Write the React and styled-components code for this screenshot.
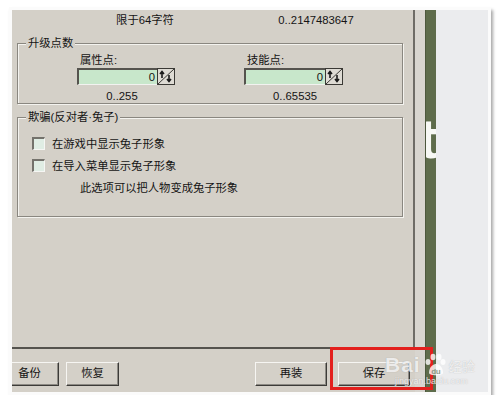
import React from 'react';
import styled, { createGlobalStyle } from 'styled-components';

const Global = createGlobalStyle`
  body {
    margin: 0;
    background: #ffffff;
    font-family: "Liberation Sans", "Noto Sans CJK SC", sans-serif;
  }
`
const Frame = styled.div`
  position: relative;
  margin: 7px 0 0 9px;
  width: 476px;
  height: 382px;
  padding: 3px;
  background: #fbfbfb;
  box-shadow: 2px 3px 3px rgba(0, 0, 0, 0.35);
`
const Screen = styled.div`
  display: flex;
  height: 100%;
  overflow: hidden;
  background: #d4d0c8;
  font-size: 11.3px;
  color: #141414;
`
const LeftCol = styled.div`
  display: flex;
  flex-direction: column;
  width: 403px;
`
const Panel = styled.div`
  height: 337px;
  border-right: 2px solid #6e6c66;
  border-bottom: 2px solid #55534e;
`
const TopRow = styled.div`
  display: grid;
  grid-template-columns: 266px 76px;
  height: 20px;
  line-height: 20px;
  text-align: center;
  white-space: nowrap;
`
const GroupBox = styled.div`
  position: relative;
  margin: ${p => p.$top}px 0 0 5px;
  width: 384px;
  height: ${p => p.$height}px;
  border: 1px solid #8a8780;
  box-shadow: inset 1px 1px #f4f3ef, 1px 1px #f4f3ef;
`
const Legend = styled.span`
  position: absolute;
  top: -8px;
  left: 8px;
  padding: 0 2px;
  background: #d4d0c8;
  line-height: 14px;
`
const FieldRow = styled.div`
  display: flex;
  padding: 9px 0 0 59px;
  gap: 69px;
`
const Field = styled.div`
  display: flex;
  flex-direction: column;
  width: ${p => p.$width}px;
`
const Label = styled.div`
  line-height: 14px;
  padding-left: 3px;
  margin-bottom: 1px;
`
const SpinBox = styled.div`
  display: flex;
  height: 17px;
`
const Input = styled.div`
  flex: 1;
  background: #c8e7cb;
  border-top: 2px solid #55534e;
  border-left: 2px solid #55534e;
  border-bottom: 1px solid #f2f2f0;
  text-align: right;
  line-height: 14px;
  padding-right: 2px;
`
const SpinButton = styled.div`
  width: 18px;
  height: 17px;
  background: #dedbd4;
`
const Range = styled.div`
  width: ${p => p.$width}px;
  margin-top: 4px;
  line-height: 14px;
  text-align: center;
`
const Options = styled.div`
  display: flex;
  flex-direction: column;
  padding: 14px 0 0 14px;
`
const CheckRow = styled.div`
  display: flex;
  align-items: center;
  height: 22px;
  gap: 7px;
  padding-left: ${p => p.$indent || 0}px;
`
const CheckBox = styled.span`
  width: 13px;
  height: 13px;
  box-sizing: border-box;
  background: #e0ede4;
  border-top: 2px solid #74726c;
  border-left: 2px solid #74726c;
  border-right: 1px solid #f6f6f4;
  border-bottom: 1px solid #f6f6f4;
`
const ButtonBar = styled.div`
  display: flex;
  padding-top: 13px;
`
const Button = styled.div`
  box-sizing: border-box;
  width: ${p => p.$width}px;
  height: 24px;
  margin-left: ${p => p.$left}px;
  border: 1px solid;
  border-color: #f6f5f2 #3c3b38 #3c3b38 #f6f5f2;
  box-shadow: inset -1px -1px #8d8a84;
  line-height: 21px;
  text-align: center;
  flex-shrink: 0;
`
const Gutter = styled.div`
  width: 10px;
  background: #d8d5cf;
`
const GreenBar = styled.div`
  width: 11px;
  overflow: hidden;
  background: #5e6c4b;
  border-left: 1px solid #4d583d;
  box-sizing: border-box;
`
const Glyph = styled.div`
  margin: 101px 0 0 -7px;
  font-family: "Liberation Sans", sans-serif;
  font-weight: bold;
  font-size: 56px;
  line-height: 1;
  color: #f7f8f4;
`
const LightSide = styled.div`
  flex: 1;
  background: #ebecee;
`
const Highlight = styled.div`
  position: absolute;
  left: 321px;
  top: 340px;
  width: 103px;
  height: 43px;
  box-sizing: border-box;
  border: 3px solid #e3201d;
`
const Watermark = styled.div`
  position: absolute;
  left: 376px;
  top: 346px;
  display: flex;
  flex-direction: column;
  color: rgba(255, 255, 255, 0.78);
  font-family: "Liberation Sans", "Noto Sans CJK SC", sans-serif;
  text-shadow: 0 0 1px rgba(120, 120, 120, 0.5);
`
const MarkRow = styled.div`
  display: flex;
  align-items: center;
  gap: 3px;
`
const MarkBig = styled.span`
  font-size: 21px;
  font-weight: bold;
  letter-spacing: 1px;
`
const MarkSmall = styled.span`
  font-size: 13px;
`
const MarkUrl = styled.span`
  font-size: 9px;
  margin: -1px 0 0 10px;
`

function Spinner() {
  return (
    <SpinButton>
      <svg width="18" height="17" viewBox="0 0 18 17">
        <rect x="0.5" y="0.5" width="17" height="16" fill="none" stroke="#3a3935" />
        <line x1="1" y1="16" x2="17" y2="1" stroke="#3a3935" />
        <path d="M5 4 L5 10 M3 6 L5 3.5 L7 6" stroke="#1a1a1a" strokeWidth="1.6" fill="none" />
        <path d="M12 7 L12 13 M10 11 L12 13.5 L14 11" stroke="#1a1a1a" strokeWidth="1.6" fill="none" />
      </svg>
    </SpinButton>
  )
}

function Paw() {
  return (
    <svg width="22" height="24" viewBox="0 0 22 24">
      <g fill="rgba(255,255,255,0.8)">
        <ellipse cx="4" cy="9" rx="2.5" ry="3" />
        <ellipse cx="9" cy="4" rx="2.5" ry="3.2" />
        <ellipse cx="15" cy="4" rx="2.5" ry="3.2" />
        <ellipse cx="19" cy="9" rx="2.5" ry="3" />
        <path d="M5 20 C5 13 10 11 12 11 C15 11 19 14 19 20 C19 23 5 23 5 20 Z" />
      </g>
      <text x="12" y="21" fontSize="8" textAnchor="middle" fill="#7b8a70" fontFamily="Liberation Sans">du</text>
    </svg>
  )
}

export default function App() {
  return (
    <>
      <Global />
      <Frame>
        <Screen>
          <LeftCol>
            <Panel>
              <TopRow>
                <span>限于64字符</span>
                <span>0..2147483647</span>
              </TopRow>
              <GroupBox $top={13} $height={59}>
                <Legend>升级点数</Legend>
                <FieldRow>
                  <Field $width={98}>
                    <Label>属性点:</Label>
                    <SpinBox>
                      <Input>0</Input>
                      <Spinner />
                    </SpinBox>
                    <Range $width={90}>0..255</Range>
                  </Field>
                  <Field $width={99}>
                    <Label>技能点:</Label>
                    <SpinBox>
                      <Input>0</Input>
                      <Spinner />
                    </SpinBox>
                    <Range $width={102}>0..65535</Range>
                  </Field>
                </FieldRow>
              </GroupBox>
              <GroupBox $top={13} $height={98}>
                <Legend>欺骗(反对者·兔子)</Legend>
                <Options>
                  <CheckRow>
                    <CheckBox />
                    <span>在游戏中显示兔子形象</span>
                  </CheckRow>
                  <CheckRow>
                    <CheckBox />
                    <span>在导入菜单显示兔子形象</span>
                  </CheckRow>
                  <CheckRow $indent={48}>
                    <span>此选项可以把人物变成兔子形象</span>
                  </CheckRow>
                </Options>
              </GroupBox>
            </Panel>
            <ButtonBar>
              <Button $width={59} $left={-12}>备份</Button>
              <Button $width={53} $left={7}>恢复</Button>
              <Button $width={72} $left={136}>再装</Button>
              <Button $width={72} $left={11}>保存</Button>
            </ButtonBar>
          </LeftCol>
          <Gutter />
          <GreenBar>
            <Glyph>t</Glyph>
          </GreenBar>
          <LightSide />
        </Screen>
        <Highlight />
        <Watermark>
          <MarkRow>
            <MarkBig>Bai</MarkBig>
            <Paw />
            <MarkSmall>经验</MarkSmall>
          </MarkRow>
          <MarkUrl>jingyan.baidu.com</MarkUrl>
        </Watermark>
      </Frame>
    </>
  )
}
